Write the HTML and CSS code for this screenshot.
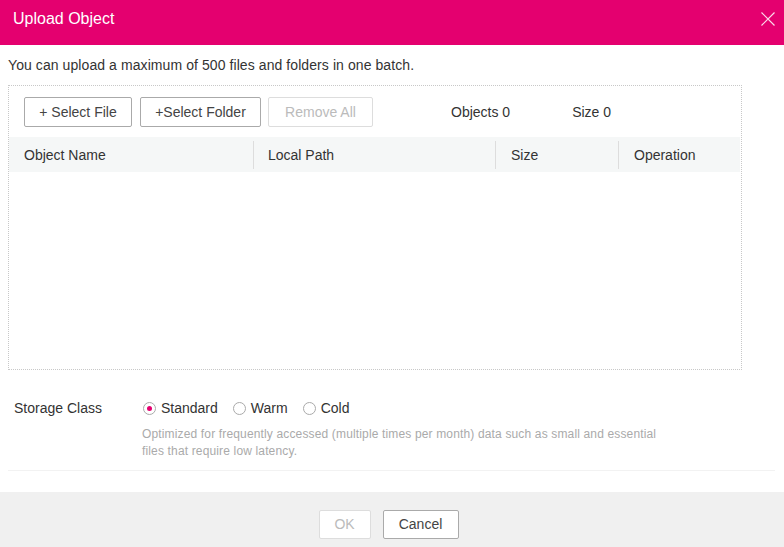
FILE: index.html
```html
<!DOCTYPE html>
<html>
<head>
<meta charset="utf-8">
<link rel="stylesheet" href="styles.css">
</head>
<body>
<div class="dialog">
  <div class="dlg-header">
    <span class="dlg-title">Upload Object</span>
    <svg class="close" width="14" height="14" viewBox="0 0 14 14"><path d="M0.5 0.5L13.5 13.5M13.5 0.5L0.5 13.5" stroke="#fff" stroke-opacity="0.85" stroke-width="1.2" fill="none"/></svg>
  </div>
  <div class="dlg-body">
    <p class="intro">You can upload a maximum of 500 files and folders in one batch.</p>
    <div class="upload-box">
      <div class="toolbar">
        <button class="btn btn-file">+ Select File</button>
        <button class="btn btn-folder">+Select Folder</button>
        <button class="btn btn-remove" disabled>Remove All</button>
        <span class="stat stat-objects">Objects 0</span>
        <span class="stat stat-size">Size 0</span>
      </div>
      <div class="thead">
        <div class="th c1">Object Name</div>
        <div class="th c2">Local Path</div>
        <div class="th c3">Size</div>
        <div class="th c4">Operation</div>
      </div>
    </div>
    <div class="storage">
      <div class="storage-label">Storage Class</div>
      <div class="storage-opts">
        <div class="radios">
          <label class="radio r-std"><span class="dot checked"></span>Standard</label>
          <label class="radio r-warm"><span class="dot"></span>Warm</label>
          <label class="radio r-cold"><span class="dot"></span>Cold</label>
        </div>
        <p class="desc">Optimized for frequently accessed (multiple times per month) data such as small and essential files that require low latency.</p>
      </div>
    </div>
    <div class="sep"></div>
  </div>
  <div class="dlg-footer">
    <button class="btn btn-ok" disabled>OK</button>
    <button class="btn btn-cancel">Cancel</button>
  </div>
</div>
</body>
</html>
```

FILE: styles.css
```css
html, body {
  margin: 0;
  padding: 0;
  background: #fff;
}
body {
  font-family: "Liberation Sans", Arial, sans-serif;
  font-size: 14px;
  color: #333;
}
.dialog {
  width: 784px;
  height: 547px;
  display: flex;
  flex-direction: column;
}
.dlg-header {
  height: 45px;
  background: #e4006f;
  display: flex;
  align-items: flex-start;
  justify-content: space-between;
  padding: 0 9px 0 13px;
  box-sizing: border-box;
}
.dlg-title {
  color: #fff;
  font-size: 16px;
  line-height: 20px;
  margin-top: 9px;
}
.close {
  margin-top: 12px;
}
.dlg-body {
  padding: 0 8px;
  flex: 1;
}
.intro {
  margin: 0;
  line-height: 20px;
  height: 20px;
  padding-top: 10px;
  color: #333;
  letter-spacing: 0.08px;
}
.upload-box {
  margin-top: 10px;
  width: 734px;
  height: 285px;
  box-sizing: border-box;
  border: 1px dotted #c8c8c8;
}
.toolbar {
  display: flex;
  align-items: center;
  height: 30px;
  padding: 11px 0 0 15px;
}
.btn {
  font-family: "Liberation Sans", Arial, sans-serif;
  font-size: 14px;
  height: 30px;
  background: #fff;
  border: 1px solid #aaa;
  border-radius: 2px;
  color: #444;
  padding: 0;
  box-sizing: border-box;
  cursor: pointer;
}
.btn[disabled] {
  border-color: #ddd;
  color: #bbb;
  cursor: default;
}
.btn-file { width: 108px; }
.btn-folder { width: 121px; margin-left: 8px; }
.btn-remove { width: 105px; margin-left: 7px; }
.stat { color: #333; }
.stat-objects { margin-left: 78px; }
.stat-size { margin-left: 62px; }
.thead {
  margin-top: 10px;
  height: 35px;
  width: 731px;
  background: #f5f7f7;
  display: flex;
  align-items: center;
}
.th {
  box-sizing: border-box;
  padding-left: 15px;
  line-height: 27px;
  padding-top: 1px;
  color: #333;
}
.c1 { width: 244px; }
.c2 { width: 242px; border-left: 1px solid #ddd; padding-left: 14px; }
.c3 { width: 123px; border-left: 1px solid #ddd; }
.c4 { width: 122px; border-left: 1px solid #ddd; }
.storage {
  display: flex;
  margin-top: 28px;
}
.storage-label {
  width: 134px;
  padding-left: 6px;
  box-sizing: border-box;
  line-height: 20px;
  color: #333;
}
.radios {
  display: flex;
  align-items: center;
  height: 20px;
}
.radio {
  display: flex;
  align-items: center;
  color: #333;
}
.r-warm, .r-cold { margin-left: 14px; }
.dot {
  width: 13px;
  height: 13px;
  box-sizing: border-box;
  border: 1px solid #aaa;
  border-radius: 50%;
  margin-right: 5px;
  margin-left: 1px;
  display: inline-block;
  position: relative;
}
.dot.checked::after {
  content: "";
  position: absolute;
  left: 3px;
  top: 3px;
  width: 5px;
  height: 5px;
  border-radius: 50%;
  background: #e4006f;
}
.desc {
  margin: 8px 0 0 0;
  width: 520px;
  font-size: 12px;
  letter-spacing: 0.15px;
  line-height: 17px;
  color: #aaa;
}
.sep {
  margin-top: 10px;
  height: 1px;
  width: 767px;
  background: #f2f2f2;
}
.dlg-footer {
  height: 55px;
  background: #f0f0f0;
  display: flex;
  justify-content: center;
  align-items: flex-start;
  padding-top: 18px;
  padding-right: 7px;
  box-sizing: border-box;
  gap: 12px;
}
.btn-ok { width: 52px; height: 29px; padding-bottom: 2px; }
.btn-cancel { width: 76px; height: 29px; padding-bottom: 2px; }
```
